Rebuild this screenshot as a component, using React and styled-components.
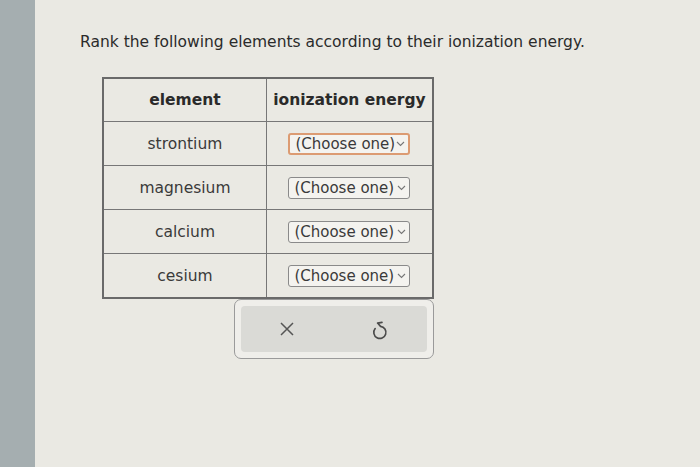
import React from "react";
import styled, { createGlobalStyle } from "styled-components";

const Global = createGlobalStyle`
  html, body {
    margin: 0;
    padding: 0;
    background: #eae9e3;
  }
  body {
    font-family: "DejaVu Sans", Verdana, sans-serif;
    color: #2f2f2f;
  }
`;

const Page = styled.div`
  display: flex;
  width: 700px;
  height: 467px;
  overflow: hidden;
`;

const Strip = styled.div`
  width: 35px;
  flex-shrink: 0;
  background: #a5aeb0;
`;

const Main = styled.main`
  flex: 1;
  padding: 32px 0 0 45px;
`;

const Title = styled.p`
  margin: 0;
  font-size: 15.5px;
  line-height: 20px;
  color: #2b2b2b;
`;

const Block = styled.div`
  margin: 25px 0 0 22px;
  width: 332px;
`;

const Table = styled.table`
  border-collapse: collapse;
  width: 332px;
  border: 2px solid #6a6a6a;
`;

const Th = styled.th`
  height: 42px;
  padding: 0;
  width: ${(p) => p.w}px;
  font-size: 15.5px;
  font-weight: bold;
  color: #2a2a2a;
  border: 1.5px solid #777;
  text-align: center;
`;

const Td = styled.td`
  height: 43px;
  padding: 0;
  font-size: 15.5px;
  color: #3a3a3a;
  border: 1.5px solid #777;
  text-align: center;
`;

const Select = styled.div`
  display: inline-flex;
  align-items: center;
  justify-content: space-between;
  box-sizing: border-box;
  width: 122px;
  height: 22px;
  padding: 0 3px 0 5px;
  background: #f4f3ef;
  border: ${(p) => (p.active ? "2px solid #dc9b72" : "1px solid #8a8a8a")};
  border-radius: 3px;
  font-size: 15px;
  color: #3a3a3a;
`;

const Actions = styled.div`
  display: flex;
  justify-content: flex-end;
`;

const Panel = styled.div`
  box-sizing: border-box;
  width: 200px;
  height: 60px;
  padding: 6px;
  background: #efeeea;
  border: 1px solid #9a9a9a;
  border-radius: 7px;
`;

const Inner = styled.div`
  height: 100%;
  display: flex;
  align-items: center;
  justify-content: space-around;
  background: #dadad6;
  border-radius: 4px;
`;

const Chevron = () => (
  <svg width="9" height="6" viewBox="0 0 9 6">
    <path d="M1 1 L4.5 4.5 L8 1" fill="none" stroke="#777" strokeWidth="1.1" />
  </svg>
);

const CloseIcon = () => (
  <svg width="16" height="16" viewBox="0 0 16 16">
    <path d="M2 2 L14 14 M14 2 L2 14" stroke="#555" strokeWidth="1.5" fill="none" />
  </svg>
);

const UndoIcon = () => (
  <svg width="20" height="22" viewBox="0 0 18 20">
    <path
      d="M4.6 9.6 A5.5 5.5 0 1 0 9.5 7.6 L6.8 4.6 M6.8 4.6 L10.8 4"
      fill="none"
      stroke="#4a4a4a"
      strokeWidth="1.5"
      strokeLinecap="round"
      strokeLinejoin="round"
    />
  </svg>
);

const elements = ["strontium", "magnesium", "calcium", "cesium"];

const App = () => {
  return (
    <>
      <Global />
      <Page>
        <Strip />
        <Main>
          <Title>Rank the following elements according to their ionization energy.</Title>
          <Block>
            <Table>
              <thead>
                <tr>
                  <Th w={165}>element</Th>
                  <Th w={167}>ionization energy</Th>
                </tr>
              </thead>
              <tbody>
                {elements.map((el, i) => (
                  <tr key={el}>
                    <Td>{el}</Td>
                    <Td>
                      <Select active={i === 0}>
                        (Choose one) <Chevron />
                      </Select>
                    </Td>
                  </tr>
                ))}
              </tbody>
            </Table>
            <Actions>
              <Panel>
                <Inner>
                  <CloseIcon />
                  <UndoIcon />
                </Inner>
              </Panel>
            </Actions>
          </Block>
        </Main>
      </Page>
    </>
  );
};

export default App;
